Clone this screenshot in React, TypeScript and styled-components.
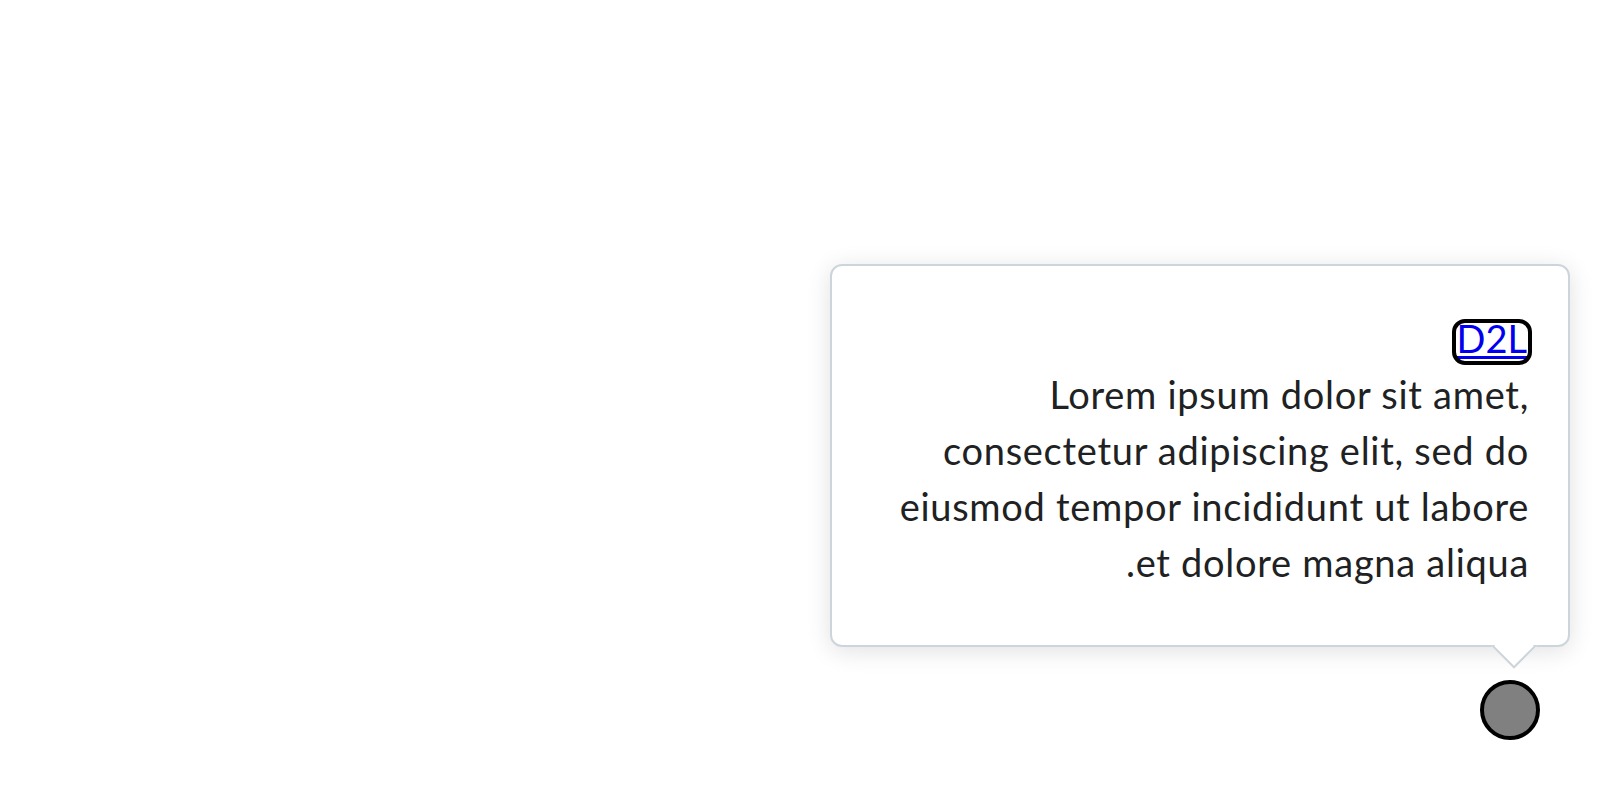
import React from "react";
import styled, { createGlobalStyle } from "styled-components";

const GlobalStyle = createGlobalStyle`
  html, body {
    margin: 0;
    padding: 0;
    background: #ffffff;
  }
  body {
    font-family: Lato, "Noto Sans", sans-serif;
  }
`;

const Page = styled.div`
  direction: rtl;
  box-sizing: border-box;
  width: 100%;
  height: 100vh;
  display: flex;
  justify-content: flex-start;
  align-items: flex-end;
  padding: 0 60px 60px 0;
`;

const TargetWrap = styled.div`
  position: relative;
  width: 60px;
  height: 60px;
`;

const Target = styled.div`
  box-sizing: border-box;
  width: 60px;
  height: 60px;
  border-radius: 50%;
  border: 4px solid #000000;
  background: #808080;
`;

const Tooltip = styled.div`
  position: absolute;
  right: -30px;
  bottom: calc(100% + 33px);
  box-sizing: border-box;
  width: 740px;
  padding: 44px 39px 55px 39px;
  background: #ffffff;
  border: 2px solid #cdd5dc;
  border-radius: 12px;
  box-shadow: 0 4px 24px 0 rgba(0, 0, 0, 0.12);
  color: #202122;
  font-family: Lato, "Noto Sans", sans-serif;
  font-size: 38px;
  letter-spacing: 0.72px;
  line-height: 56px;
  text-align: start;
`;

const PointerClip = styled.div`
  position: absolute;
  top: 100%;
  right: 29px;
  width: 50px;
  height: 26px;
  overflow: hidden;
`;

const PointerSquare = styled.div`
  position: absolute;
  left: 9px;
  top: -15px;
  box-sizing: border-box;
  width: 32px;
  height: 32px;
  background: #ffffff;
  border: 2px solid #cdd5dc;
  transform: rotate(45deg);
`;

const LinkRow = styled.div`
  line-height: 56px;
  padding-right: 2px;
`;

const Link = styled.a`
  display: inline-block;
  color: #0000ee;
  text-decoration: underline;
  text-decoration-thickness: 3px;
  text-underline-offset: 3px;
  font-family: Lato, "Noto Sans", sans-serif;
  font-size: 38px;
  letter-spacing: 0;
  line-height: 28px;
  padding: 0 0 8px 0;
  outline: 4px solid #000000;
  outline-offset: 1px;
  border-radius: 8px;
`;

const Body = styled.div``;

export default function App() {
  return (
    <>
      <GlobalStyle />
      <Page>
        <TargetWrap>
          <Target />
          <Tooltip role="tooltip">
            <LinkRow>
              <Link href="#">D2L</Link>
            </LinkRow>
            <Body>
              Lorem ipsum dolor sit amet, consectetur adipiscing elit, sed do
              eiusmod tempor incididunt ut labore et dolore magna aliqua.
            </Body>
            <PointerClip>
              <PointerSquare />
            </PointerClip>
          </Tooltip>
        </TargetWrap>
      </Page>
    </>
  );
}
